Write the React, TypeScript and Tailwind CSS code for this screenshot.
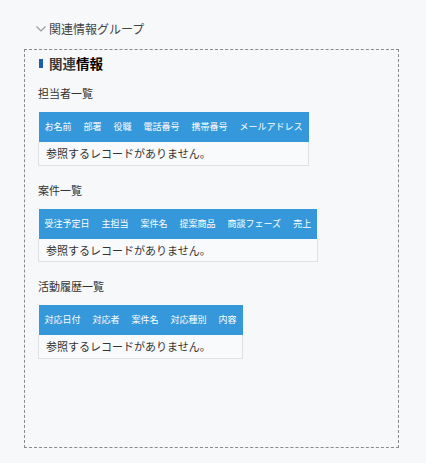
import React from "react";

const FONT = { fontFamily: '"Noto Sans CJK JP", "Noto Sans", sans-serif' };

function Table({ cols }: { cols: string[] }) {
  return (
    <table className="border-collapse">
      <thead>
        <tr className="bg-[#3598db]">
          {cols.map((c) => (
            <th
              key={c}
              className="h-[30px] px-[6px] text-[9px] font-normal text-white whitespace-nowrap text-left leading-[12px]"
            >
              {c}
            </th>
          ))}
        </tr>
      </thead>
      <tbody>
        <tr>
          <td
            colSpan={cols.length}
            className="h-[23px] pl-[7px] text-[11px] leading-[14px] text-[#333] bg-[#f9fafb] border-x border-b border-[#dfe1e4] whitespace-nowrap"
          >
            参照するレコードがありません。
          </td>
        </tr>
      </tbody>
    </table>
  );
}

function Section({ label, cols, first }: { label: string; cols: string[]; first?: boolean }) {
  return (
    <div className={first ? "mt-[12px]" : "mt-[16px]"}>
      <div className="h-[16px] text-[11px] leading-[16px] text-[#333]">{label}</div>
      <div className="mt-[11px]">
        <Table cols={cols} />
      </div>
    </div>
  );
}

export default function App() {
  return (
    <div className="w-[426px] h-[463px] bg-[#f7f8fa] overflow-hidden" style={FONT}>
      <div className="pt-[20px] pl-[35px] flex items-center h-[38px] pb-[0px]">
        <svg width="12" height="8" viewBox="0 0 12 8" className="mr-[2px]">
          <path d="M1.5 1.5 L6 6 L10.5 1.5" fill="none" stroke="#9a9a9a" strokeWidth="1.2" />
        </svg>
        <span className="text-[12px] leading-[18px] text-[#444]">関連情報グループ</span>
      </div>
      <div className="ml-[24px] mt-[11px] w-[375px] h-[399px] border border-dashed border-[#8a8a8a] pl-[13px] pt-[3px]">
        <div className="flex items-center h-[20px] mt-[0px]">
          <div className="w-[4px] h-[9px] bg-[#1f5fa8] ml-[1px] mr-[6px]" />
          <span className="text-[13.5px] leading-[20px] font-semibold text-[#3a3a3a]">
            関連<span className="font-bold text-black">情報</span>
          </span>
        </div>
        <Section
          first
          label="担当者一覧"
          cols={["お名前", "部署", "役職", "電話番号", "携帯番号", "メールアドレス"]}
        />
        <Section
          label="案件一覧"
          cols={["受注予定日", "主担当", "案件名", "提案商品", "商談フェーズ", "売上"]}
        />
        <Section
          label="活動履歴一覧"
          cols={["対応日付", "対応者", "案件名", "対応種別", "内容"]}
        />
      </div>
    </div>
  );
}
